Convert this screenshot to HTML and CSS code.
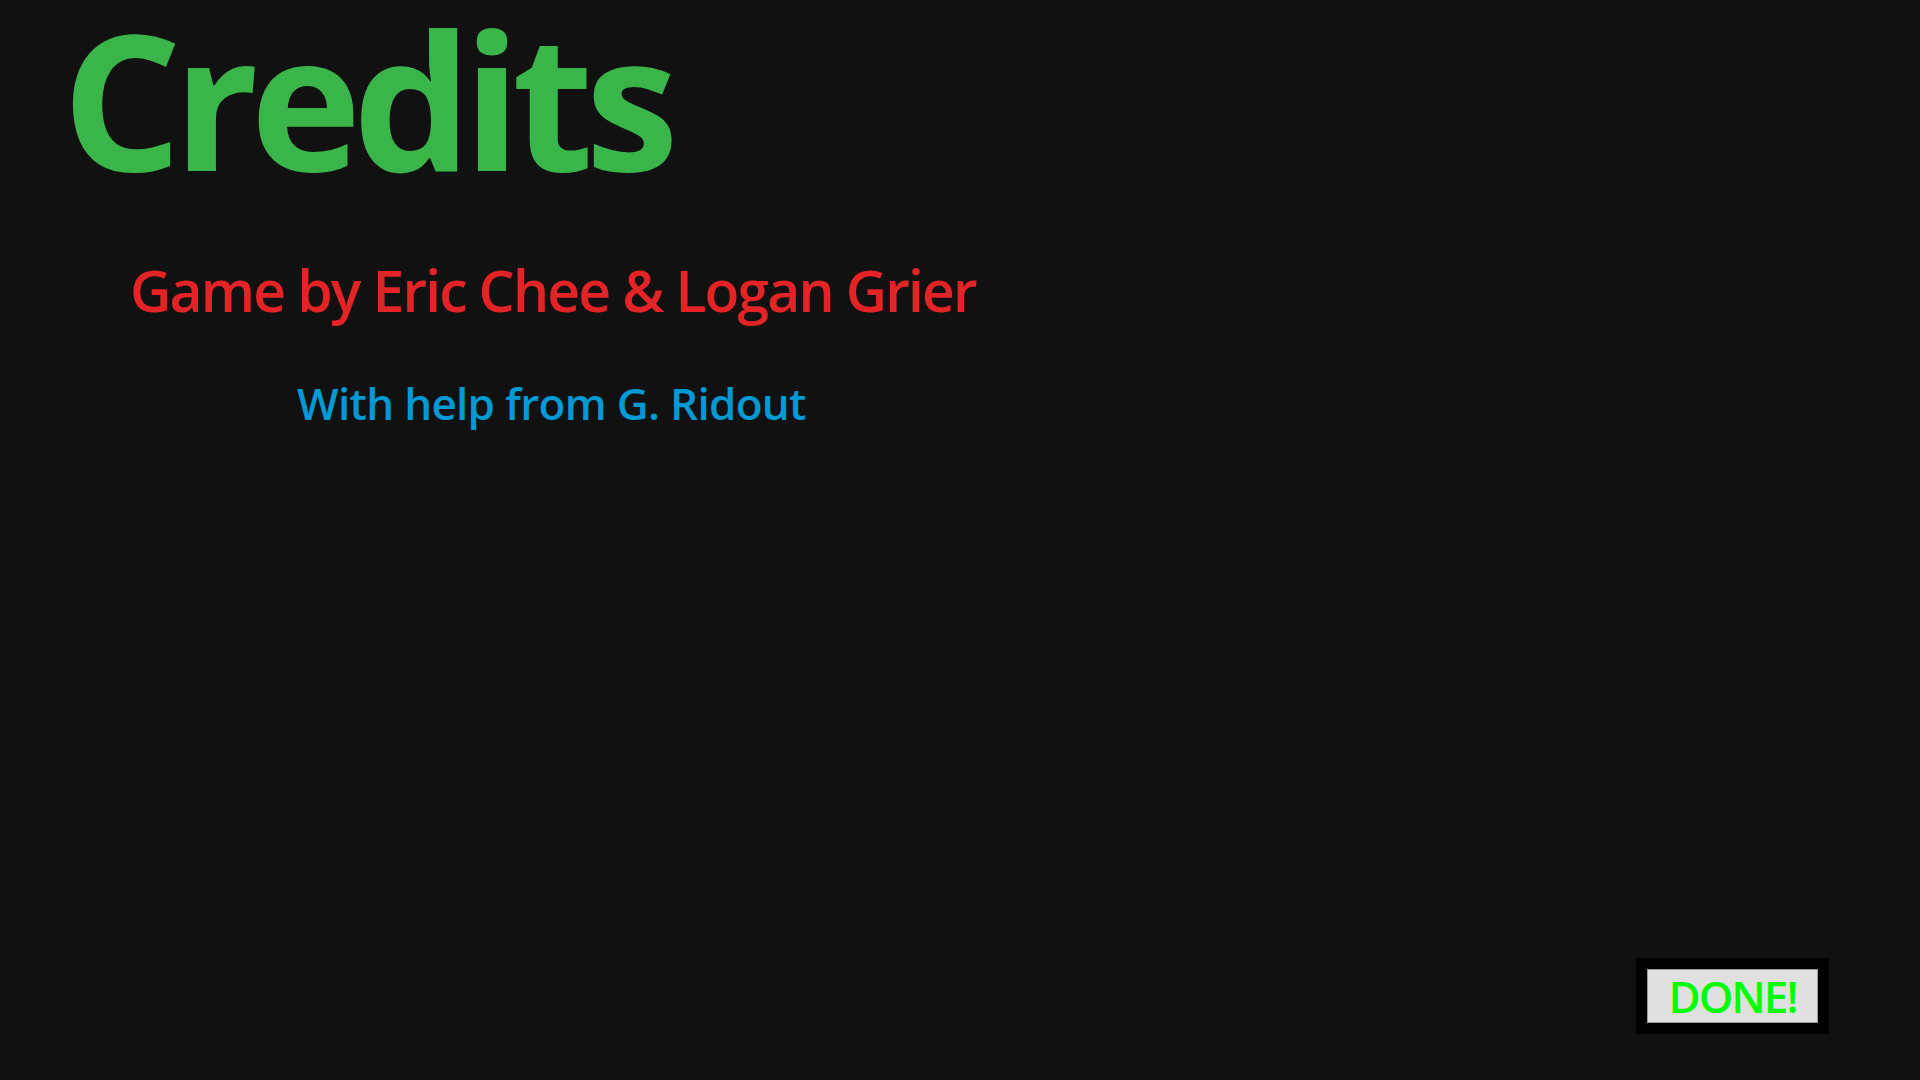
FILE: index.html
```html
<!DOCTYPE html>
<html lang="en">
<head>
<meta charset="utf-8">
<title>Credits</title>
<link rel="stylesheet" href="styles.css">
</head>
<body>
<main class="screen">
  <h1 class="title">Credits</h1>
  <p class="authors">Game by Eric Chee &amp; Logan Grier</p>
  <p class="helper">With help from G. Ridout</p>
  <footer class="actions">
    <div class="done-frame">
      <button class="done-button" type="button">DONE!</button>
    </div>
  </footer>
</main>
</body>
</html>
```

FILE: styles.css
```css
html, body {
  margin: 0;
  padding: 0;
  background: #111111;
}

.screen {
  box-sizing: border-box;
  height: 1080px;
  display: flex;
  flex-direction: column;
  font-family: "Open Sans", "Noto Sans", sans-serif;
  font-weight: 600;
}

.title {
  margin: 4px 0 0 0;
  padding-left: 62px;
  font-size: 188px;
  line-height: 1;
  font-weight: 700;
  color: #39b54a;
  letter-spacing: -8.5px;
}

.authors {
  margin: 70px 0 0 0;
  padding-left: 130px;
  font-size: 57px;
  line-height: 1;
  color: #e42326;
  letter-spacing: -1.85px;
}

.helper {
  margin: 62px 0 0 0;
  padding-left: 297px;
  font-size: 44px;
  line-height: 1;
  color: #0099d4;
  letter-spacing: -0.7px;
}

.actions {
  margin-top: auto;
  display: flex;
  justify-content: flex-end;
  padding: 0 91px 46px 0;
}

.done-frame {
  background: #000000;
  padding: 11px;
  display: flex;
}

.done-button {
  box-sizing: border-box;
  width: 171px;
  height: 54px;
  margin: 0;
  padding: 0;
  background: #e0e0e0;
  border: 1px solid #9a9a9a;
  border-radius: 0;
  font-family: "Open Sans", "Noto Sans", sans-serif;
  font-weight: 600;
  font-size: 44px;
  line-height: 1;
  letter-spacing: -2px;
  color: #00ff00;
  display: flex;
  align-items: center;
  justify-content: center;
}
```
